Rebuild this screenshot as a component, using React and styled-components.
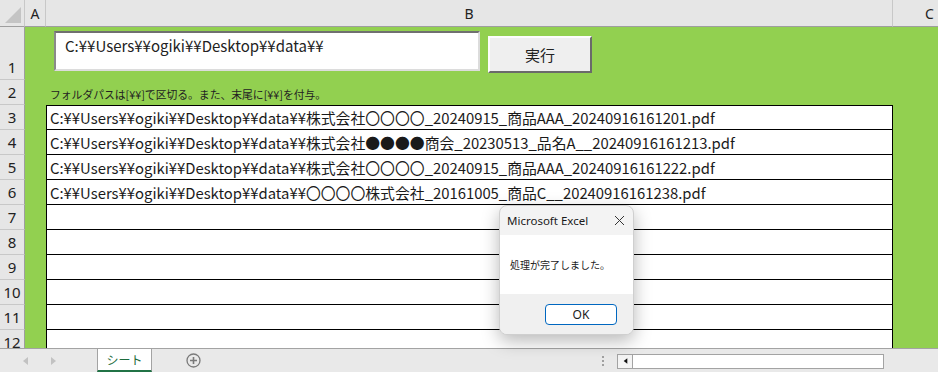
import React from "react";
import styled, { createGlobalStyle } from "styled-components";

const GREEN = "#92d050";
const HEAD_BG = "#e6e6e6";

const rows = [
  "C:¥¥Users¥¥ogiki¥¥Desktop¥¥data¥¥株式会社〇〇〇〇_20240915_商品AAA_20240916161201.pdf",
  "C:¥¥Users¥¥ogiki¥¥Desktop¥¥data¥¥株式会社●●●●商会_20230513_品名A__20240916161213.pdf",
  "C:¥¥Users¥¥ogiki¥¥Desktop¥¥data¥¥株式会社〇〇〇〇_20240915_商品AAA_20240916161222.pdf",
  "C:¥¥Users¥¥ogiki¥¥Desktop¥¥data¥¥〇〇〇〇株式会社_20161005_商品C__20240916161238.pdf",
  "", "", "", "", "", "",
];

const GlobalStyle = createGlobalStyle`
  html, body { margin: 0; padding: 0; background: #fff; }
  body { font-family: "Noto Sans CJK JP", "Noto Sans", sans-serif; }
`;

const Page = styled.div`
  position: relative;
  width: 938px;
  height: 372px;
  display: flex;
  flex-direction: column;
  overflow: hidden;
`;

const Sheet = styled.div`
  height: 348px;
  overflow: hidden;
  display: grid;
  grid-template-columns: 25px 21px 847px 74px;
  grid-template-rows: 27px 53px 25px repeat(10, 25px);
`;

const Corner = styled.div`
  position: relative;
  background: ${HEAD_BG};
  border-right: 1px solid #c8c8c8;
  border-bottom: 1px solid #9e9e9e;
  &::after {
    content: "";
    position: absolute;
    right: 3px;
    bottom: 3px;
    border-style: solid;
    border-width: 0 0 16px 16px;
    border-color: transparent transparent #c4c4c4 transparent;
  }
`;

const ColHead = styled.div`
  background: ${HEAD_BG};
  border-right: 1px solid #c8c8c8;
  border-bottom: 1px solid #9e9e9e;
  display: flex;
  align-items: center;
  justify-content: center;
  font-family: "Noto Sans", sans-serif;
  font-size: 14px;
  color: #222;
`;

const RowHead = styled.div`
  background: ${HEAD_BG};
  border-right: 1px solid #9e9e9e;
  border-bottom: 1px solid #c8c8c8;
  display: flex;
  align-items: flex-end;
  justify-content: center;
  line-height: 24px;
  font-family: "Noto Sans", sans-serif;
  font-size: 15px;
  color: #222;
`;

const GreenCell = styled.div`
  background: ${GREEN};
`;

const ControlCell = styled.div`
  background: ${GREEN};
  display: flex;
  align-items: flex-start;
  padding: 4px 0 0 8px;
  gap: 8px;
`;

const PathBox = styled.div`
  box-sizing: border-box;
  width: 426px;
  height: 40px;
  background: #fff;
  border-top: 2px solid #707070;
  border-left: 2px solid #8a8a8a;
  border-right: 2px solid #dcdcdc;
  border-bottom: 2px solid #dcdcdc;
  padding: 2px 0 0 9px;
  font-size: 15px;
  color: #222;
`;

const RunButton = styled.div`
  box-sizing: border-box;
  margin-top: 5px;
  width: 104px;
  height: 37px;
  background: #efefef;
  border-top: 2px solid #fcfcfc;
  border-left: 2px solid #fcfcfc;
  border-right: 2px solid #6a6a6a;
  border-bottom: 2px solid #6a6a6a;
  display: flex;
  align-items: center;
  justify-content: center;
  font-size: 15px;
  color: #222;
`;

const NoteCell = styled.div`
  background: ${GREEN};
  display: flex;
  align-items: center;
  padding: 2px 0 0 4px;
  font-size: 10.8px;
  color: #222;
`;

const TableCell = styled.div`
  box-sizing: border-box;
  background: #fff;
  border-left: 1px solid #000;
  border-right: 1px solid #000;
  border-bottom: 1px solid #000;
  border-top: ${(p) => (p.$first ? "1px solid #000" : "none")};
  display: flex;
  align-items: center;
  padding-left: 3px;
  font-size: 14.85px;
  color: #1a1a1a;
  white-space: nowrap;
  overflow: hidden;
`;

const TabBar = styled.div`
  box-sizing: border-box;
  height: 24px;
  background: #e9e9e9;
  border-top: 1px solid #a3a3a3;
  display: flex;
  align-items: stretch;
`;

const NavArea = styled.div`
  width: 97px;
  display: flex;
  align-items: center;
  gap: 21px;
  padding-left: 22px;
  box-sizing: border-box;
`;

const SheetTab = styled.div`
  box-sizing: border-box;
  width: 55px;
  background: #fff;
  border-left: 1px solid #a3a3a3;
  border-right: 1px solid #a3a3a3;
  border-bottom: 2px solid #217346;
  display: flex;
  align-items: center;
  justify-content: center;
  font-size: 12px;
  color: #1d6b3c;
`;

const AddSheet = styled.div`
  margin-left: 34px;
  display: flex;
  align-items: center;
`;

const Spacer = styled.div`
  flex: 1;
`;

const Grip = styled.div`
  display: flex;
  flex-direction: column;
  justify-content: center;
  gap: 2px;
  margin-right: 13px;
  & > span {
    width: 2px;
    height: 2px;
    background: #a0a0a0;
  }
`;

const HScroll = styled.div`
  box-sizing: border-box;
  align-self: center;
  width: 267px;
  height: 15px;
  margin-right: 54px;
  margin-top: 1px;
  border: 1px solid #a3a3a3;
  background: #fff;
  display: flex;
`;

const ScrollBtn = styled.div`
  width: 14px;
  border-right: 1px solid #a3a3a3;
  background: #f4f4f4;
  display: flex;
  align-items: center;
  justify-content: center;
`;

const Dialog = styled.div`
  position: absolute;
  left: 499px;
  top: 205px;
  width: 135px;
  height: 130px;
  border-radius: 8px;
  overflow: hidden;
  border: 1px solid #cfcfcf;
  box-sizing: border-box;
  box-shadow: 0 6px 18px rgba(0, 0, 0, 0.28);
  display: flex;
  flex-direction: column;
  background: #f3f3f3;
`;

const DialogTitle = styled.div`
  height: 29px;
  display: flex;
  align-items: center;
  justify-content: space-between;
  padding: 0 8px 0 7px;
  font-family: "Noto Sans", sans-serif;
  font-size: 11.5px;
  color: #1a1a1a;
`;

const DialogBody = styled.div`
  height: 59px;
  background: #fff;
  display: flex;
  align-items: center;
  padding-left: 10px;
  font-size: 10px;
  color: #1a1a1a;
`;

const DialogFooter = styled.div`
  flex: 1;
  background: #f0f0f0;
  display: flex;
  justify-content: flex-end;
  padding: 10px 16px 0 0;
`;

const OkButton = styled.div`
  box-sizing: border-box;
  width: 72px;
  height: 21px;
  border: 1px solid #0067c0;
  border-radius: 4px;
  background: #fff;
  display: flex;
  align-items: center;
  justify-content: center;
  font-family: "Noto Sans", sans-serif;
  font-size: 12px;
  color: #1a1a1a;
`;

const Tri = ({ dir, color, size = 7 }) => (
  <svg width={size} height={size + 3} viewBox="0 0 7 10">
    {dir === "left" ? (
      <path d="M6 1 L1 5 L6 9 Z" fill={color} />
    ) : (
      <path d="M1 1 L6 5 L1 9 Z" fill={color} />
    )}
  </svg>
);

export default function App() {
  return (
    <Page>
      <GlobalStyle />
      <Sheet>
        <Corner />
        <ColHead>A</ColHead>
        <ColHead>B</ColHead>
        <ColHead>C</ColHead>

        <RowHead>1</RowHead>
        <GreenCell />
        <ControlCell>
          <PathBox>C:¥¥Users¥¥ogiki¥¥Desktop¥¥data¥¥</PathBox>
          <RunButton>実行</RunButton>
        </ControlCell>
        <GreenCell />

        <RowHead>2</RowHead>
        <GreenCell />
        <NoteCell>フォルダパスは[¥¥]で区切る。また、末尾に[¥¥]を付与。</NoteCell>
        <GreenCell />

        {rows.map((text, i) => (
          <React.Fragment key={i}>
            <RowHead>{i + 3}</RowHead>
            <GreenCell />
            <TableCell $first={i === 0}>{text}</TableCell>
            <GreenCell />
          </React.Fragment>
        ))}
      </Sheet>

      <TabBar>
        <NavArea>
          <Tri dir="left" color="#c2c2c2" />
          <Tri dir="right" color="#c2c2c2" />
        </NavArea>
        <SheetTab>シート</SheetTab>
        <AddSheet>
          <svg width="15" height="15" viewBox="0 0 15 15">
            <circle cx="7.5" cy="7.5" r="6.5" fill="none" stroke="#7a7a7a" strokeWidth="1.3" />
            <path d="M7.5 4 V11 M4 7.5 H11" stroke="#7a7a7a" strokeWidth="1.6" />
          </svg>
        </AddSheet>
        <Spacer />
        <Grip>
          <span />
          <span />
          <span />
        </Grip>
        <HScroll>
          <ScrollBtn>
            <Tri dir="left" color="#111" size={5} />
          </ScrollBtn>
        </HScroll>
      </TabBar>

      <Dialog>
        <DialogTitle>
          <span>Microsoft Excel</span>
          <svg width="11" height="11" viewBox="0 0 11 11">
            <path d="M1 1 L10 10 M10 1 L1 10" stroke="#333" strokeWidth="1" />
          </svg>
        </DialogTitle>
        <DialogBody>処理が完了しました。</DialogBody>
        <DialogFooter>
          <OkButton>OK</OkButton>
        </DialogFooter>
      </Dialog>
    </Page>
  );
}
